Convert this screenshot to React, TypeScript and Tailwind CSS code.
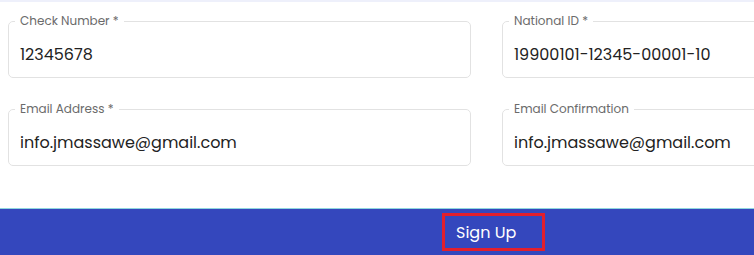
import React from 'react';

type FieldProps = { label: string; value: string };

const Field = ({ label, value }: FieldProps) => (
  <fieldset className="w-[463px] h-[64px] border border-[#e2e2e2] rounded-[5px] px-[6px] m-0">
    <legend className="px-[5px] text-[12px] leading-[14px] text-[#6b6b6b]">{label}</legend>
    <div className="pl-[5px] pt-[17px] text-[16px] leading-[20px] text-[#222]">{value}</div>
  </fieldset>
);

const App = () => {
  return (
    <div className="w-[754px] h-[255px] overflow-hidden bg-white">
      <div
        className="w-[973px] h-[255px] flex flex-col"
        style={{ fontFamily: 'Poppins, Inter, "Noto Sans", sans-serif' }}
      >
        <div className="h-[2px] bg-[#eef0fb]" />
        <div className="flex-1 pl-[8px] pt-[12px]">
          <div className="grid grid-cols-[463px_463px] gap-x-[31px] gap-y-[24px] w-max">
            <Field label="Check Number *" value="12345678" />
            <Field label="National ID *" value="19900101-12345-00001-10" />
            <Field label="Email Address *" value="info.jmassawe@gmail.com" />
            <Field label="Email Confirmation" value="info.jmassawe@gmail.com" />
          </div>
        </div>
        <div className="h-[47px] bg-[#3447bd] border-t border-[#8fd6df] pl-[442px] pt-[4px]">
          <button className="w-[103px] h-[38px] pl-[11px] pt-[2px] text-left border-[3px] border-[#e21f2c] text-white text-[16px] font-normal">
            Sign Up
          </button>
        </div>
      </div>
    </div>
  );
};

export default App;
